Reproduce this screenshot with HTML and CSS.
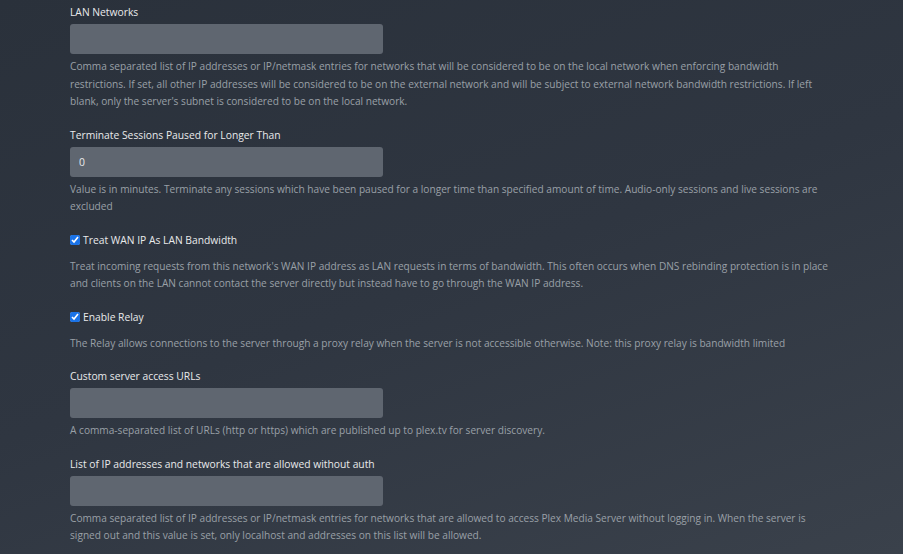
FILE: index.html
```html
<!DOCTYPE html>
<html>
<head>
<meta charset="utf-8">
<link rel="stylesheet" href="styles.css">
</head>
<body>
<div class="page">
  <div class="form">
    <div class="group">
      <label class="label">LAN Networks</label>
      <input class="field" type="text" value="">
      <p class="desc">Comma separated list of IP addresses or IP/netmask entries for networks that will be considered to be on the local network when enforcing bandwidth restrictions. If set, all other IP addresses will be considered to be on the external network and will be subject to external network bandwidth restrictions. If left blank, only the server's subnet is considered to be on the local network.</p>
    </div>
    <div class="group">
      <label class="label">Terminate Sessions Paused for Longer Than</label>
      <input class="field" type="text" value="0">
      <p class="desc">Value is in minutes. Terminate any sessions which have been paused for a longer time than specified amount of time. Audio-only sessions and live sessions are excluded</p>
    </div>
    <div class="group">
      <label class="check"><input type="checkbox" checked><span>Treat WAN IP As LAN Bandwidth</span></label>
      <p class="desc desc-check">Treat incoming requests from this network's WAN IP address as LAN requests in terms of bandwidth. This often occurs when DNS rebinding protection is in place and clients on the LAN cannot contact the server directly but instead have to go through the WAN IP address.</p>
    </div>
    <div class="group">
      <label class="check"><input type="checkbox" checked><span>Enable Relay</span></label>
      <p class="desc desc-check">The Relay allows connections to the server through a proxy relay when the server is not accessible otherwise. Note: this proxy relay is bandwidth limited</p>
    </div>
    <div class="group">
      <label class="label">Custom server access URLs</label>
      <input class="field" type="text" value="">
      <p class="desc">A comma-separated list of URLs (http or https) which are published up to plex.tv for server discovery.</p>
    </div>
    <div class="group">
      <label class="label">List of IP addresses and networks that are allowed without auth</label>
      <input class="field" type="text" value="">
      <p class="desc">Comma separated list of IP addresses or IP/netmask entries for networks that are allowed to access Plex Media Server without logging in. When the server is signed out and this value is set, only localhost and addresses on this list will be allowed.</p>
    </div>
  </div>
</div>
</body>
</html>
```

FILE: styles.css
```css
html, body {
  margin: 0;
  padding: 0;
  height: 100%;
}
body {
  background: linear-gradient(160deg, #2a313b 0%, #2f3641 50%, #3a414b 100%);
  font-family: "Open Sans", "Liberation Sans", sans-serif;
  overflow: hidden;
}
.page {
  padding: 3px 0 0 70px;
}
.form {
  width: 763px;
}
.group {
  margin-bottom: 15px;
}
.label {
  display: block;
  color: #e9eaeb;
  font-size: 10.3px;
  font-weight: 500;
  line-height: 17px;
  margin-bottom: 4px;
  padding-top: 1px;
}
.field {
  display: block;
  box-sizing: border-box;
  width: 313px;
  height: 30px;
  margin: -1px 0 0;
  padding: 0 9px;
  border: none;
  border-radius: 3px;
  background: #5f6670;
  color: #e9eaeb;
  font-family: "Open Sans", "Liberation Sans", sans-serif;
  font-size: 10.4px;
  outline: none;
}
.desc {
  margin: 4px 0 0;
  color: #9aa0a7;
  font-size: 10.15px;
  line-height: 17.5px;
}
.desc-check {
  margin-top: 9px;
}
.check {
  display: flex;
  align-items: center;
  color: #e9eaeb;
  font-size: 10.3px;
  font-weight: 500;
  line-height: 17px;
  padding-top: 1px;
}
.check input {
  width: 10px;
  height: 10px;
  margin: 0 3px 0 0;
  accent-color: #1a73e8;
}
```
